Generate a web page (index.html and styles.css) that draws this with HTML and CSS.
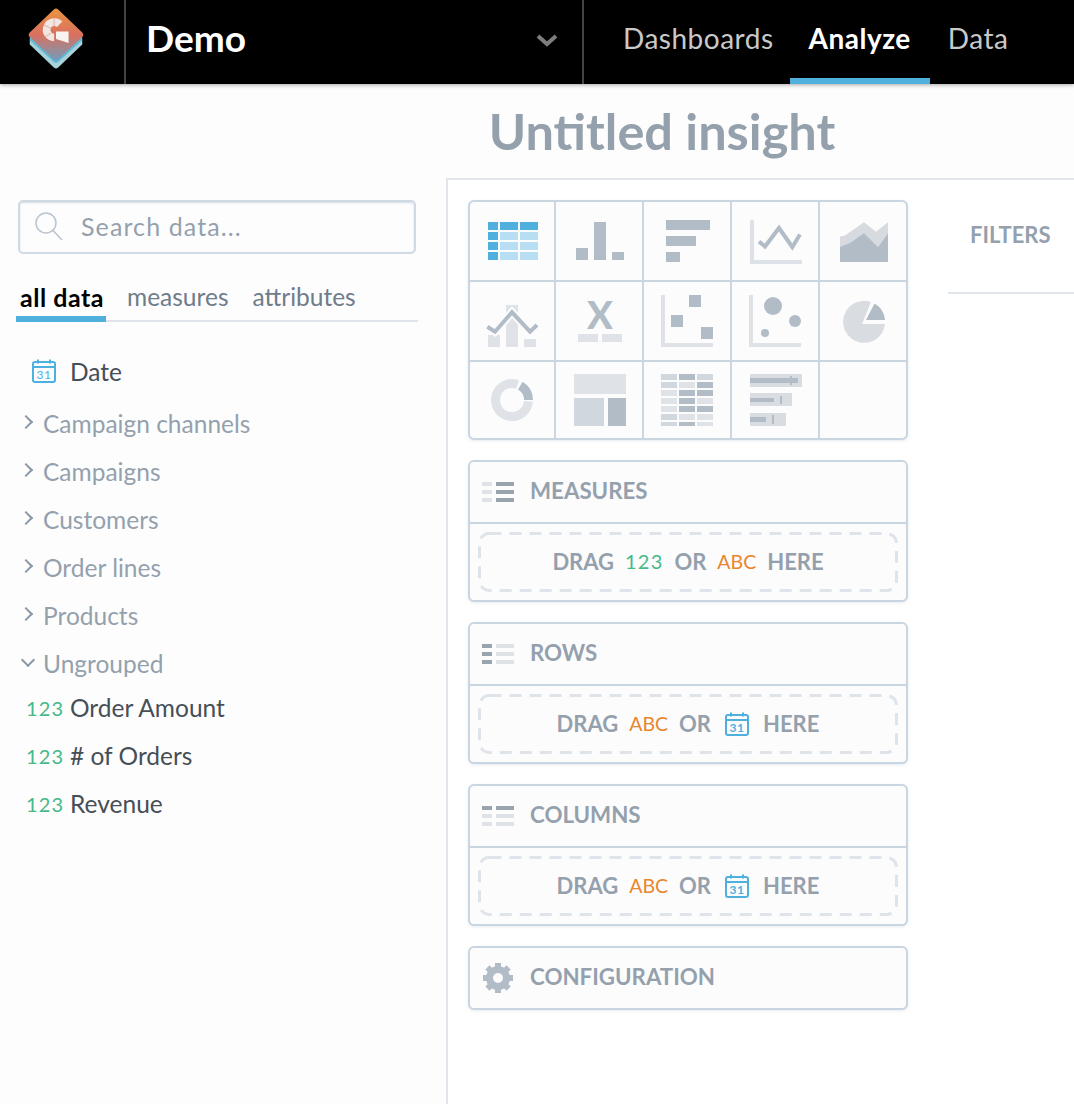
FILE: index.html
```html
<!DOCTYPE html>
<html lang="en">
  <head>
    <meta charset="utf-8" />
    <title>Analyze</title>
    <link rel="stylesheet" href="styles.css">
  </head>
  <body>
    <header class="topbar">
      <div class="logo-cell">
        <svg width="66" height="70" viewBox="0 0 60 64">
          <defs>
            <linearGradient id="logo-top" x1="0" y1="0" x2="0" y2="1">
              <stop offset="0" stop-color="#ea9442"/>
              <stop offset="0.5" stop-color="#d9705f"/>
              <stop offset="1" stop-color="#6f9dbd"/>
            </linearGradient>
          </defs>
          <path d="M30 13l24 21v4L32 59a3 3 0 0 1-4 0L6 38v-4z" fill="#a7d2da"/>
          <path d="M30 10l24 21v3L32 54a3 3 0 0 1-4 0L6 34v-3z" fill="#5fbcd8"/>
          <path d="M28 6a3 3 0 0 1 4 0l22 21a2.500 2.500 0 0 1 0 4L32 52a3 3 0 0 1-4 0L6 31a2.500 2.500 0 0 1 0-4z" fill="url(#logo-top)"/>
          <path d="M33.300 19.500A7 7 0 1 0 28.300 31.500" fill="none" stroke="#f2e6e2" stroke-width="7"/>
          <path d="M28.300 14v7M19 20l6 3M20 31l6-4" stroke="#d8a99f" stroke-width="0.800"/>
          <path d="M30 26h11.500v10.500L30 33z" fill="#f7f3f1"/>
        </svg>
      </div>
      <div class="project">
        <span class="project-name">Demo</span>
        <svg class="project-arrow" width="22" height="14" viewBox="0 0 22 14">
          <path d="M2 3l9 8 9-8" fill="none" stroke="#7d7d7d" stroke-width="4"/>
        </svg>
      </div>
      <nav class="nav">
        <a class="nav-item">Dashboards</a>
        <a class="nav-item active">Analyze</a>
        <a class="nav-item">Data</a>
      </nav>
    </header>

    <div class="title-row">
      <h1>Untitled insight</h1>
    </div>

    <div class="workspace">
      <aside class="sidebar">
        <div class="search">
          <svg width="30" height="32" viewBox="0 0 30 32">
            <circle cx="12" cy="12" r="10" fill="none" stroke="#b9c4ce" stroke-width="1.500"/>
            <path d="M19 19.500l9 9.500" stroke="#b9c4ce" stroke-width="1.500"/>
          </svg>
          <input type="text" placeholder="Search data...">
        </div>
        <div class="tabs">
          <span class="tab active">all data</span>
          <span class="tab">measures</span>
          <span class="tab">attributes</span>
        </div>

        <div class="field date-field">
          <svg class="cal" width="24" height="24" viewBox="0 0 24 24">
            <rect x="1" y="3" width="22" height="20" rx="2" fill="none" stroke="#4db0de" stroke-width="2"/>
            <path d="M1 8h22M6 0.500v4M18 0.500v4" stroke="#4db0de" stroke-width="2" fill="none"/>
            <text x="12" y="20" text-anchor="middle" class="cal-num">31</text>
          </svg>
          <span>Date</span>
        </div>
        <div class="group first"><i class="caret"></i>Campaign channels</div>
        <div class="group"><i class="caret"></i>Campaigns</div>
        <div class="group"><i class="caret"></i>Customers</div>
        <div class="group"><i class="caret"></i>Order lines</div>
        <div class="group"><i class="caret"></i>Products</div>
        <div class="group"><i class="caret open"></i>Ungrouped</div>
        <div class="field metric first-metric"><span class="num">123</span><span>Order Amount</span></div>
        <div class="field metric"><span class="num">123</span><span># of Orders</span></div>
        <div class="field metric"><span class="num">123</span><span>Revenue</span></div>
      </aside>

      <main class="main">
        <div class="buckets">
          <div class="viz-grid">
            <div class="viz">
              <svg viewBox="482 211 60 60">
                <g fill="#4fb0de">
                  <rect x="488" y="222" width="10" height="8"/><rect x="500" y="222" width="18" height="8"/><rect x="520" y="222" width="18" height="8"/>
                  <rect x="488" y="232" width="10" height="8"/><rect x="488" y="242" width="10" height="8"/><rect x="488" y="252" width="10" height="8"/>
                </g>
                <g fill="#b7def2">
                  <rect x="500" y="232" width="18" height="8"/><rect x="520" y="232" width="18" height="8"/>
                  <rect x="500" y="242" width="18" height="8"/><rect x="520" y="242" width="18" height="8"/>
                  <rect x="500" y="252" width="18" height="8"/><rect x="520" y="252" width="18" height="8"/>
                </g>
              </svg>
            </div>
            <div class="viz">
              <svg viewBox="569 211 60 60" fill="#b1bcc7">
                <rect x="576" y="248" width="12" height="12"/><rect x="594" y="222" width="12" height="38"/><rect x="612" y="252" width="12" height="8"/>
              </svg>
            </div>
            <div class="viz">
              <svg viewBox="657 211 60 60" fill="#b1bcc7">
                <rect x="666" y="220" width="44" height="10"/><rect x="666" y="236" width="30" height="10"/><rect x="666" y="252" width="14" height="10"/>
              </svg>
            </div>
            <div class="viz">
              <svg viewBox="745 211 60 60">
                <path d="M750 220h4v40h48v4h-52z" fill="#dde2e8"/>
                <path d="M759 241.500l6 5 14-18.500 13.300 19 7.700-12.500" fill="none" stroke="#b1bcc7" stroke-width="4"/>
              </svg>
            </div>
            <div class="viz">
              <svg viewBox="833 211 60 60">
                <path d="M840 236.500l5-1 19-13.200 12 9.400 12-9.400V262h-48z" fill="#d7dbe0"/>
                <path d="M840 247l10-4 14-9.700 14 14 10-13.800V262h-48z" fill="#b1bcc7"/>
              </svg>
            </div>

            <div class="viz">
              <svg viewBox="482 291 60 60">
                <g fill="#dfe3e8"><rect x="488" y="335" width="12" height="12"/><rect x="506" y="305" width="12" height="42"/><rect x="524" y="339" width="12" height="8"/></g>
                <path d="M487.300 326.700l7.700 5 17-19.400 18 19.400 7-6.700" fill="none" stroke="#fcfcfd" stroke-width="8"/>
                <path d="M487.300 326.700l7.700 5 17-19.400 18 19.400 7-6.700" fill="none" stroke="#b1bcc7" stroke-width="4"/>
              </svg>
            </div>
            <div class="viz">
              <svg viewBox="569 291 60 60">
                <text x="600" y="328.500" text-anchor="middle" class="viz-x">X</text>
                <g fill="#dfe3e8"><rect x="578" y="334" width="20" height="8"/><rect x="602" y="334" width="20" height="8"/></g>
              </svg>
            </div>
            <div class="viz">
              <svg viewBox="657 291 60 60">
                <path d="M661 295h4v48h48v4h-52z" fill="#dfe3e8"/>
                <g fill="#b1bcc7"><rect x="689" y="295" width="12" height="12"/><rect x="671" y="315" width="12" height="12"/><rect x="701" y="327" width="12" height="12"/></g>
              </svg>
            </div>
            <div class="viz">
              <svg viewBox="745 291 60 60">
                <path d="M749 295h4v48h48v4h-52z" fill="#dfe3e8"/>
                <g fill="#b1bcc7"><circle cx="773" cy="306" r="9"/><circle cx="795" cy="321" r="6"/><circle cx="765" cy="333" r="4"/></g>
              </svg>
            </div>
            <div class="viz">
              <svg viewBox="833 291 60 60">
                <path d="M862 324h23a21 21 0 1 1-14-22z" fill="#d9dde2"/>
                <path d="M866 320l8.500-16.500a21 21 0 0 1 10.500 16.500z" fill="#b1bcc7"/>
              </svg>
            </div>

            <div class="viz">
              <svg viewBox="482 370 60 60" fill="none" stroke-width="9">
                <path d="M528.400 401.400a16.500 16.500 0 1 1-10.800-16.900" stroke="#dfe3e8"/>
                <path d="M520.300 385.700a16.500 16.500 0 0 1 8.200 14.300" stroke="#b1bcc7"/>
              </svg>
            </div>
            <div class="viz">
              <svg viewBox="569 370 60 60">
                <rect x="574" y="374" width="52" height="20" fill="#dfe3e8"/>
                <rect x="574" y="398" width="30" height="28" fill="#d0d7df"/>
                <rect x="608" y="398" width="18" height="28" fill="#b1bcc7"/>
              </svg>
            </div>
            <div class="viz">
              <svg viewBox="657 370 60 60">
                <g fill="#d0d7df">
                  <rect x="661" y="374" width="16" height="6"/><rect x="697" y="374" width="16" height="6"/>
                  <rect x="661" y="382" width="16" height="6"/><rect x="661" y="414" width="16" height="6"/>
                  <rect x="661" y="422" width="16" height="4"/>
                </g>
                <g fill="#b1bcc7">
                  <rect x="679" y="374" width="16" height="6"/><rect x="697" y="382" width="16" height="6"/>
                  <rect x="679" y="390" width="16" height="6"/><rect x="697" y="390" width="16" height="6"/>
                  <rect x="679" y="398" width="16" height="6"/><rect x="679" y="406" width="16" height="6"/>
                  <rect x="697" y="406" width="16" height="6"/><rect x="679" y="422" width="16" height="4"/>
                </g>
                <g fill="#dfe3e8">
                  <rect x="679" y="382" width="16" height="6"/><rect x="661" y="390" width="16" height="6"/>
                  <rect x="661" y="398" width="16" height="6"/><rect x="697" y="398" width="16" height="6"/>
                  <rect x="661" y="406" width="16" height="6"/><rect x="679" y="414" width="16" height="6"/>
                  <rect x="697" y="414" width="16" height="6"/><rect x="697" y="422" width="16" height="4"/>
                </g>
              </svg>
            </div>
            <div class="viz">
              <svg viewBox="745 370 60 60">
                <g fill="#d9dde2"><rect x="750" y="374" width="52" height="13"/><rect x="750" y="393" width="42" height="13"/><rect x="750" y="413" width="36" height="13"/></g>
                <g fill="#b1bcc7">
                  <rect x="750" y="378" width="48" height="5"/><rect x="790" y="376" width="2" height="9"/>
                  <rect x="750" y="398" width="24" height="4"/><rect x="780" y="396" width="2" height="8"/>
                  <rect x="750" y="417" width="16" height="5"/><rect x="772" y="415" width="2" height="9"/>
                </g>
              </svg>
            </div>
            <div class="viz"></div>
          </div>

          <section class="bucket">
            <div class="bucket-head">
              <svg class="list-icon" width="32" height="20" viewBox="0 0 32 20">
                <g fill="#dfe3e8"><rect width="10" height="4"/><rect y="8" width="10" height="4"/><rect y="16" width="10" height="4"/></g>
                <g fill="#99a4af"><rect x="14" width="18" height="4"/><rect x="14" y="8" width="18" height="4"/><rect x="14" y="16" width="18" height="4"/></g>
              </svg>
              <span>MEASURES</span>
            </div>
            <div class="drop">
              <svg class="dash" width="420" height="60"><rect x="1.500" y="1.500" width="417" height="57" rx="10"/></svg>
              <span>DRAG</span><span class="num">123</span><span>OR</span><span class="abc">ABC</span><span>HERE</span>
            </div>
          </section>

          <section class="bucket">
            <div class="bucket-head">
              <svg class="list-icon" width="32" height="20" viewBox="0 0 32 20">
                <g fill="#99a4af"><rect width="10" height="4"/><rect y="8" width="10" height="4"/><rect y="16" width="10" height="4"/></g>
                <g fill="#dfe3e8"><rect x="14" width="18" height="4"/><rect x="14" y="8" width="18" height="4"/><rect x="14" y="16" width="18" height="4"/></g>
              </svg>
              <span>ROWS</span>
            </div>
            <div class="drop">
              <svg class="dash" width="420" height="60"><rect x="1.500" y="1.500" width="417" height="57" rx="10"/></svg>
              <span>DRAG</span><span class="abc">ABC</span><span>OR</span>
              <svg class="cal" width="24" height="24" viewBox="0 0 24 24">
                <rect x="1" y="3" width="22" height="20" rx="2" fill="none" stroke="#4db0de" stroke-width="2"/>
                <path d="M1 8h22M6 0.500v4M18 0.500v4" stroke="#4db0de" stroke-width="2" fill="none"/>
                <text x="12" y="20" text-anchor="middle" class="cal-num">31</text>
              </svg>
              <span>HERE</span>
            </div>
          </section>

          <section class="bucket">
            <div class="bucket-head">
              <svg class="list-icon" width="32" height="20" viewBox="0 0 32 20">
                <g fill="#99a4af"><rect width="10" height="4"/><rect x="14" width="18" height="4"/></g>
                <g fill="#dfe3e8"><rect y="8" width="10" height="4"/><rect y="16" width="10" height="4"/><rect x="14" y="8" width="18" height="4"/><rect x="14" y="16" width="18" height="4"/></g>
              </svg>
              <span>COLUMNS</span>
            </div>
            <div class="drop">
              <svg class="dash" width="420" height="60"><rect x="1.500" y="1.500" width="417" height="57" rx="10"/></svg>
              <span>DRAG</span><span class="abc">ABC</span><span>OR</span>
              <svg class="cal" width="24" height="24" viewBox="0 0 24 24">
                <rect x="1" y="3" width="22" height="20" rx="2" fill="none" stroke="#4db0de" stroke-width="2"/>
                <path d="M1 8h22M6 0.500v4M18 0.500v4" stroke="#4db0de" stroke-width="2" fill="none"/>
                <text x="12" y="20" text-anchor="middle" class="cal-num">31</text>
              </svg>
              <span>HERE</span>
            </div>
          </section>

          <section class="bucket config">
            <div class="bucket-head">
              <svg class="list-icon" width="32" height="32" viewBox="0 0 32 32">
                <circle cx="16" cy="16" r="8.500" fill="none" stroke="#b1bcc7" stroke-width="7"/>
                <g stroke="#b1bcc7" stroke-width="6">
                  <path d="M16 1v6M16 25v6M1 16h6M25 16h6M5.400 5.400l4.200 4.200M22.400 22.400l4.200 4.200M5.400 26.600l4.200-4.200M22.400 9.600l4.200-4.200"/>
                </g>
              </svg>
              <span>CONFIGURATION</span>
            </div>
          </section>
        </div>

        <div class="filters">
          <div class="filters-head">FILTERS</div>
        </div>
      </main>
    </div>
  </body>
</html>
```

FILE: styles.css
```css
html {
  font-family: Lato, "Open Sans", sans-serif;
  font-size: 24.500px;
}

body {
  margin: 0;
  height: 100vh;
  overflow: hidden;
  display: flex;
  flex-direction: column;
  background-color: #fdfdfe;
}

.cal {
  flex: none;
}

.cal-num {
  font-family: Lato, sans-serif;
  font-size: 12px;
  fill: #4db0de;
  letter-spacing: 0.5px;
}

/* top bar */
.topbar {
  flex: none;
  display: flex;
  height: 84px;
  background-color: #000;
  color: #fff;
  box-shadow: 0 1px 4px rgba(0, 0, 0, 0.35);
  z-index: 2;
}

.logo-cell {
  box-sizing: border-box;
  width: 126px;
  padding: 3px 0 0 23px;
  border-right: 2px solid #444;
}

.project {
  box-sizing: border-box;
  width: 458px;
  display: flex;
  align-items: center;
  justify-content: space-between;
  padding: 0 24px 0 20px;
  border-right: 2px solid #444;
}

.project-name {
  font-size: 37px;
  font-weight: 700;
  margin-top: -10px;
}

.project-arrow {
  margin-top: -4px;
}

.nav {
  display: flex;
  margin-left: 20px;
}

.nav-item {
  padding: 0 19px;
  line-height: 76px;
  height: 78px;
  font-size: 28px;
  letter-spacing: 0.5px;
  color: #c9c9c9;
  border-bottom: 6px solid transparent;
}

.nav-item.active {
  margin: 0 -1px 0 -3px;
  color: #fff;
  font-weight: 700;
  border-bottom-color: #4fb0de;
}

/* title */
.title-row {
  flex: none;
  height: 94px;
  padding-left: 250px;
  text-align: center;
}

h1 {
  margin: 0;
  padding-top: 16px;
  font-size: 50.500px;
  line-height: 62px;
  font-weight: 700;
  color: #94a1ad;
}

.workspace {
  flex: 1;
  display: flex;
  min-height: 0;
}

/* left panel */
.sidebar {
  box-sizing: border-box;
  flex: none;
  width: 446px;
  padding-top: 22px;
}

.search {
  box-sizing: border-box;
  display: flex;
  align-items: center;
  gap: 17px;
  width: 398px;
  height: 54px;
  margin-left: 18px;
  padding: 0 0 0 14px;
  border: 2px solid #cfdae4;
  border-radius: 5px;
  box-shadow: inset 0 1px 2px rgba(120, 140, 160, 0.3);
}

.search input {
  flex: 1;
  min-width: 0;
  margin-top: -2px;
  border: 0;
  padding: 0;
  outline: 0;
  background: none;
  font: inherit;
  font-size: 25px;
  letter-spacing: 1.100px;
}

.search input::placeholder {
  color: #94a1ad;
  opacity: 1;
}

.tabs {
  display: flex;
  align-items: flex-end;
  height: 68px;
  width: 402px;
  margin-left: 16px;
  border-bottom: 2px solid #dfe5eb;
  box-sizing: border-box;
}

.tab {
  padding: 0 12px 9px 12px;
  font-size: 24.500px;
  line-height: 28px;
  color: #6f7c8a;
}

.tab.active {
  padding: 0 4px 5px 4px;
  width: 82px;
  margin: 0 9px -2px 0;
  font-size: 25px;
  letter-spacing: 0.5px;
  white-space: nowrap;
  color: #000;
  font-weight: 700;
  border-bottom: 6px solid #4fb0de;
}

.field,
.group {
  display: flex;
  align-items: center;
  height: 48px;
}

.field {
  color: #464e56;
}

.date-field {
  margin-top: 25px;
  padding-left: 32px;
  height: 48px;
}

.date-field .cal {
  margin-right: 14px;
}

.group {
  padding-left: 43px;
  position: relative;
  color: #94a1ad;
}

.group.first {
  margin-top: 4px;
}

.caret {
  position: absolute;
  left: 21px;
  top: 18px;
  width: 8px;
  height: 8px;
  border-top: 2.500px solid #8a97a4;
  border-right: 2.500px solid #8a97a4;
  transform: rotate(45deg);
}

.caret.open {
  left: 23px;
  top: 16px;
  transform: rotate(135deg);
}

.metric {
  padding-left: 26px;
}

.first-metric {
  margin-top: -4px;
}

.num,
.abc {
  font-size: 20px;
  font-weight: 400;
}

.num {
  color: #46b98a;
  letter-spacing: 1.200px;
}

.abc {
  color: #e8872d;
  font-size: 19.500px;
}

.metric .num {
  width: 44px;
  margin-top: 1px;
}

/* main area */
.main {
  flex: 1;
  display: flex;
  gap: 40px;
  padding: 20px 0 0 20px;
  border-left: 2px solid #e1e6ec;
  border-top: 2px solid #e1e6ec;
  background-color: #fff;
}

.buckets {
  flex: none;
  width: 440px;
  display: flex;
  flex-direction: column;
  gap: 20px;
}

.viz-grid {
  display: grid;
  grid-template-columns: 86px 88px 88px 88px 1fr;
  grid-template-rows: 80px 80px 76px;
  border: 2px solid #c9d5e0;
  border-radius: 6px;
  background-color: #fcfcfd;
  box-shadow: 0 1px 3px rgba(150, 170, 190, 0.25);
}

.viz {
  display: flex;
  align-items: center;
  justify-content: center;
  border-right: 2px solid #c9d5e0;
  border-bottom: 2px solid #c9d5e0;
}

.viz svg {
  width: 60px;
  height: 60px;
}

.viz:nth-child(5n) {
  border-right: 0;
}

.viz:nth-child(n + 11) {
  border-bottom: 0;
}

.viz-x {
  font-family: Lato, sans-serif;
  font-weight: 900;
  font-size: 38px;
  fill: #b1bcc7;
}

.bucket {
  border: 2px solid #c9d5e0;
  border-radius: 6px;
  background-color: #fcfcfd;
  box-shadow: 0 1px 3px rgba(150, 170, 190, 0.25);
}

.bucket-head {
  box-sizing: border-box;
  display: flex;
  align-items: center;
  height: 60px;
  padding: 0 0 0 12px;
  font-size: 22.300px;
  font-weight: 700;
  color: #94a1ad;
}

.bucket-head span {
  margin-top: -4px;
}

.list-icon {
  margin-right: 16px;
}

.bucket:not(.config) .bucket-head {
  height: 62px;
  border-bottom: 2px solid #c9d5e0;
}

.drop {
  position: relative;
  display: flex;
  align-items: center;
  justify-content: center;
  gap: 11px;
  height: 60px;
  margin: 8px;
  font-size: 22px;
  font-weight: 700;
  color: #94a1ad;
  white-space: nowrap;
}

.drop span {
  margin-top: -2px;
}

.drop .cal {
  margin: 0 3px;
}

.dash {
  position: absolute;
  left: 0;
  top: 0;
}

.dash rect {
  fill: none;
  stroke: #dfe3ea;
  stroke-width: 3;
  stroke-dasharray: 12 8;
}

.filters {
  flex: 1;
}

.filters-head {
  box-sizing: border-box;
  height: 94px;
  padding: 21px 0 0 22px;
  font-size: 22px;
  line-height: 28px;
  font-weight: 700;
  color: #94a1ad;
  border-bottom: 2px solid #dfe5eb;
}
```
